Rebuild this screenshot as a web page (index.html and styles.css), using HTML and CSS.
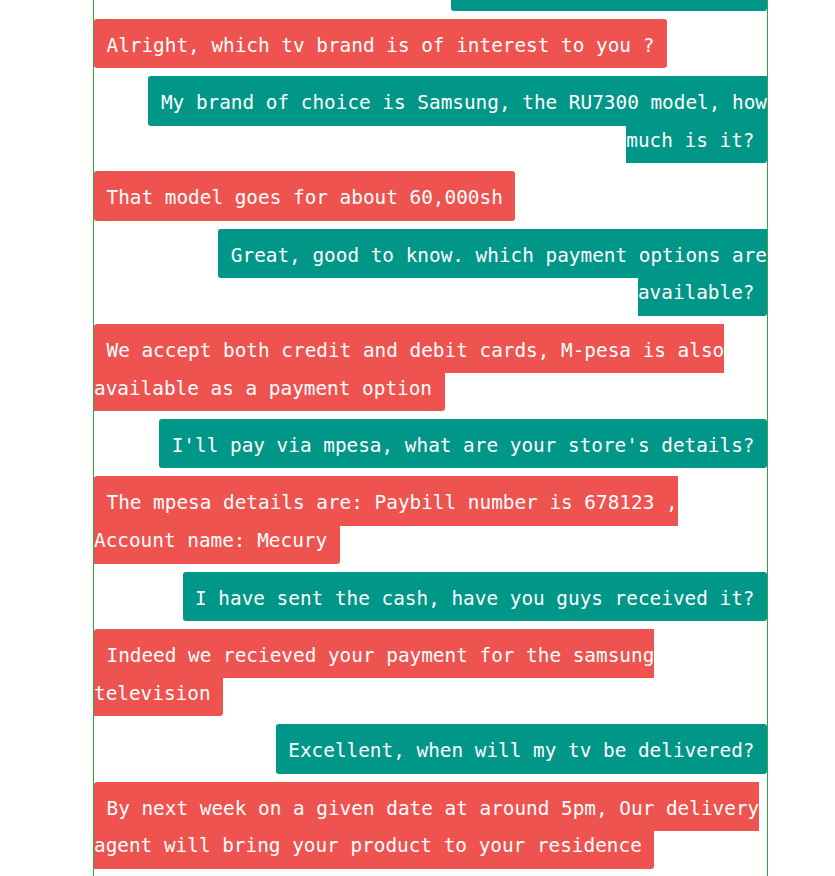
FILE: index.html
```html
<!DOCTYPE html>
<html lang="en">
<head>
<meta charset="utf-8">
<title>Chat</title>
<link rel="stylesheet" href="styles.css">
</head>
<body>
<main class="chat">
  <div class="msg msg--out"><span class="bubble bubble--out">I'd like to buy a new tv.</span></div>
  <div class="msg msg--in"><span class="bubble bubble--in">Alright, which tv brand is of interest to you ?</span></div>
  <div class="msg msg--out"><span class="bubble bubble--out">My brand of choice is Samsung, the RU7300 model, how much is it?</span></div>
  <div class="msg msg--in"><span class="bubble bubble--in">That model goes for about 60,000sh</span></div>
  <div class="msg msg--out"><span class="bubble bubble--out">Great, good to know. which payment options are available?</span></div>
  <div class="msg msg--in"><span class="bubble bubble--in">We accept both credit and debit cards, M-pesa is also available as a payment option</span></div>
  <div class="msg msg--out"><span class="bubble bubble--out">I'll pay via mpesa, what are your store's details?</span></div>
  <div class="msg msg--in"><span class="bubble bubble--in">The mpesa details are: Paybill number is 678123 , Account name: Mecury</span></div>
  <div class="msg msg--out"><span class="bubble bubble--out">I have sent the cash, have you guys received it?</span></div>
  <div class="msg msg--in"><span class="bubble bubble--in">Indeed we recieved your payment for the samsung television</span></div>
  <div class="msg msg--out"><span class="bubble bubble--out">Excellent, when will my tv be delivered?</span></div>
  <div class="msg msg--in"><span class="bubble bubble--in">By next week on a given date at around 5pm, Our delivery agent will bring your product to your residence</span></div>
</main>
</body>
</html>
```
FILE: styles.css
```css
html, body {
  margin: 0;
  padding: 0;
  background: #ffffff;
}

.chat {
  box-sizing: border-box;
  margin-left: 93px;
  width: 675px;
  height: 876px;
  padding-bottom: 1px;
  border-left: 1px solid #2aa845;
  border-right: 1px solid #2aa845;
  display: flex;
  flex-direction: column;
  justify-content: flex-end;
  overflow: hidden;
  font-family: "DejaVu Sans Mono", monospace;
  font-size: 19.37px;
  line-height: 37.8px;
  color: #ffffff;
}

.msg {
  flex: none;
  padding: 9.8px 0;
}

.msg--in {
  text-align: left;
}

.msg--out {
  text-align: right;
}

.bubble {
  padding: 15px 12.5px 11.4px;
  border-radius: 3px;
}

.bubble--in {
  background: #ef5350;
}

.bubble--out {
  background: #009688;
}
```
